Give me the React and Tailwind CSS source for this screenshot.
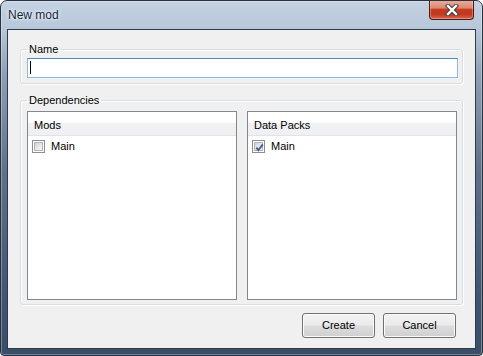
function CloseX() {
  return (
    <svg width="14" height="12" viewBox="0 0 14 12">
      <path d="M3 2 L11 10 M11 2 L3 10" stroke="#3b3b3b" strokeWidth="4.4" strokeLinecap="square" fill="none" />
      <path d="M3 2 L11 10 M11 2 L3 10" stroke="#ffffff" strokeWidth="2.4" strokeLinecap="square" fill="none" />
    </svg>
  );
}

function Check({ checked }) {
  return (
    <div className="relative w-[13px] h-[13px] border border-[#8e8f8f] bg-white p-px shrink-0">
      <div className="w-full h-full border border-[#b3b7bd] bg-[linear-gradient(135deg,#cfd3d8_0%,#e6e7e9_55%,#f7f7f7_100%)]" />
      {checked && (
        <svg className="absolute left-[1px] top-[1px]" width="11" height="11" viewBox="0 0 11 11">
          <path d="M2.3 5.6 L4.4 8.2 L8.8 2.4" stroke="#4a5d95" strokeWidth="1.9" fill="none" />
        </svg>
      )}
    </div>
  );
}

function ListPanel({ title, checked }) {
  return (
    <div className="w-[210px] h-[189px] border border-[#828790] bg-white flex flex-col">
      <div className="h-[24px] border-b border-[#e2e3e5] bg-[linear-gradient(180deg,#ffffff_0%,#ffffff_45%,#f1f2f4_50%,#eef0f3_100%)] pl-[6px] pt-[7px]">
        {title}
      </div>
      <div className="mt-[4px] ml-[4px] flex items-center gap-[6px]">
        <Check checked={checked} />
        <span>Main</span>
      </div>
    </div>
  );
}

function Button({ children }) {
  return (
    <div className="w-[73px] h-[25px] rounded-[3px] border border-[#707070] bg-[linear-gradient(180deg,#f2f2f2_0%,#ebebeb_48%,#dddddd_52%,#cfcfcf_100%)] shadow-[inset_0_0_0_1px_#fbfbfb] flex items-center justify-center">
      {children}
    </div>
  );
}

export default function App() {
  return (
    <div className="w-[483px] h-[356px] flex flex-col rounded-t-[7px] rounded-b-[4px] border border-[#27313f] bg-[linear-gradient(180deg,#c4d2e2_0px,#b7c7da_28px,#8d9eb4_75px,#5f718a_170px,#405470_300px,#3a4e68_100%)] shadow-[inset_0_0_0_1px_rgba(255,255,255,0.3)] font-['Liberation_Sans',Arial,sans-serif] text-[11px] leading-[13px] text-black overflow-hidden">
      <div className="h-[28px] shrink-0 flex items-start justify-between">
        <div className="pl-[7px] pt-[7px] text-[12px] leading-[14px] text-[#10223a] [text-shadow:0_0_5px_#ffffff,0_0_2px_#ffffff]">
          New mod
        </div>
        <div className="-mt-px mr-[8px] w-[45px] h-[20px] rounded-b-[4px] border border-[#4b1c13] border-t-0 bg-[linear-gradient(180deg,#eab0a1_0%,#dc8670_42%,#c63c22_50%,#c2381e_75%,#d66a50_100%)] shadow-[inset_0_0_0_1px_rgba(255,220,210,0.35)] flex items-center justify-center">
          <CloseX />
        </div>
      </div>
      <div className="mx-[6px] h-[320px] shrink-0 border border-[#2c3a4c] bg-[#f0f0f0] flex flex-col">
        <fieldset className="mx-[12px] mt-[13px] pb-[5px] rounded-[3px] border border-[#d5dfe5] shadow-[inset_1px_1px_0_#ffffff,1px_1px_0_#ffffff]">
          <legend className="ml-[6px] px-[2px]">Name</legend>
          <div className="ml-[6px] mt-[2px] w-[431px] h-[20px] bg-white border border-[#8cbbe6] border-t-[#4a8bc6]">
            <div className="ml-[2px] mt-[2px] w-px h-[13px] bg-black" />
          </div>
        </fieldset>
        <fieldset className="mx-[12px] mt-[10px] pb-[4px] rounded-[3px] border border-[#d5dfe5] shadow-[inset_1px_1px_0_#ffffff,1px_1px_0_#ffffff]">
          <legend className="ml-[6px] px-[2px]">Dependencies</legend>
          <div className="ml-[6px] mt-[4px] flex gap-[10px]">
            <ListPanel title="Mods" checked={false} />
            <ListPanel title="Data Packs" checked={true} />
          </div>
        </fieldset>
        <div className="mt-[8px] mr-[19px] flex justify-end gap-[8px]">
          <Button>Create</Button>
          <Button>Cancel</Button>
        </div>
      </div>
    </div>
  );
}
